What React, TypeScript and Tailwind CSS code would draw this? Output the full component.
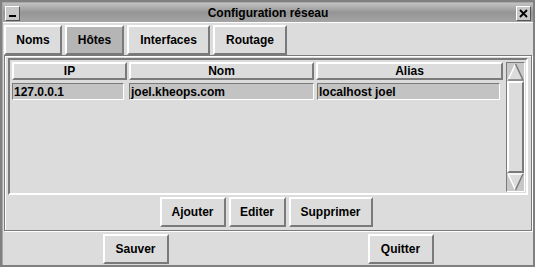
import React from "react"

const raised = "border-2 border-t-white border-l-white border-b-[#7a7a7a] border-r-[#7a7a7a]"
const sunken = "border-2 border-t-[#7a7a7a] border-l-[#7a7a7a] border-b-white border-r-white"

function Btn({ label, w, pressed }: { label: string; w: string; pressed?: boolean }) {
  return (
    <div
      className={`${w} h-[30px] flex items-center justify-center ${raised} ${
        pressed ? "bg-[#b5b5b5]" : "bg-[#dcdcdc]"
      }`}
    >
      {label}
    </div>
  )
}

function Header({ label, w }: { label: string; w: string }) {
  return <div className={`${w} h-[18px] flex items-center justify-center ${raised} bg-[#dcdcdc]`}>{label}</div>
}

function Cell({ text, w }: { text: string; w: string }) {
  return (
    <div className={`${w} h-[17px] flex items-center pl-[1px] border border-t-[#7a7a7a] border-l-[#7a7a7a] border-b-white border-r-white bg-[#c3c3c3]`}>
      {text}
    </div>
  )
}

export default function App() {
  const rows = [{ ip: "127.0.0.1", nom: "joel.kheops.com", alias: "localhost joel" }]

  return (
    <div
      className="w-[535px] h-[267px] bg-[#808080] p-[2px] text-[12px] font-bold text-black"
      style={{ fontFamily: '"Liberation Sans", Arial, sans-serif' }}
    >
      <div className="h-full flex flex-col bg-[#dcdcdc] border-l border-t border-[#a8a8a8]">
        {/* Title bar */}
        <div className="h-[19px] flex items-center px-[2px] bg-gradient-to-b from-[#c2c2c2] via-[#959595] to-[#a4a4a4]">
          <div className="w-[15px] h-[15px] mt-[1px] flex items-end justify-center pb-[3px] border border-t-white border-l-white border-b-[#555] border-r-[#555] bg-[#c8c8c8]">
            <div className="w-[7px] h-[2px] bg-black" />
          </div>
          <div className="flex-1 text-center leading-none">Configuration réseau</div>
          <div className="w-[15px] h-[15px] mt-[1px] flex items-center justify-center border border-t-white border-l-white border-b-[#555] border-r-[#555] bg-[#c8c8c8]">
            <svg width="9" height="9" viewBox="0 0 9 9">
              <path d="M1 1 L8 8 M8 1 L1 8" stroke="black" strokeWidth="1.8" />
            </svg>
          </div>
        </div>

        {/* Tabs */}
        <div className="h-[33px] flex items-center gap-[3px] pl-[1px] pt-[1px] border-t border-white">
          <Btn label="Noms" w="w-[58px]" />
          <Btn label="Hôtes" w="w-[59px]" pressed />
          <Btn label="Interfaces" w="w-[83px]" />
          <Btn label="Routage" w="w-[74px]" />
        </div>

        {/* Frame */}
        <div className="mx-[1px] h-[176px] flex flex-col border border-[#7a7a7a] shadow-[inset_1px_1px_0_white,1px_1px_0_white]">
          <div className={`mx-[3px] mt-[2px] h-[137px] flex ${sunken} bg-[#dcdcdc] pl-[2px] pt-[2px]`}>
            <div className="flex-1 flex flex-col">
              <div className="flex gap-[2px]">
                <Header label="IP" w="w-[115px]" />
                <Header label="Nom" w="w-[185px]" />
                <Header label="Alias" w="w-[187px]" />
              </div>
              <div className="flex flex-col mt-[3px]">
                {rows.map((r) => (
                  <div key={r.ip} className="flex">
                    <Cell text={r.ip} w="w-[112px]" />
                    <div className="w-[5px]" />
                    <Cell text={r.nom} w="w-[185px]" />
                    <div className="w-[3px]" />
                    <Cell text={r.alias} w="w-[183px]" />
                  </div>
                ))}
              </div>
            </div>
            {/* Scrollbar */}
            <div className="w-[19px] mr-[1px] mb-[1px] flex flex-col border border-t-[#7a7a7a] border-l-[#7a7a7a] border-b-white border-r-white bg-[#c8c8c8]">
              <svg width="17" height="18" viewBox="0 0 17 18">
                <path d="M1 17 L8.5 1 L16 17 Z" fill="#dcdcdc" />
                <path d="M1 17 L8.5 1" stroke="white" strokeWidth="1.5" />
                <path d="M8.5 1 L16 17 L1 17" stroke="#7a7a7a" strokeWidth="1.5" fill="none" />
              </svg>
              <div className="flex-1 border-2 border-t-white border-l-white border-b-[#7a7a7a] border-r-[#7a7a7a] bg-[#dcdcdc]" />
              <svg width="17" height="18" viewBox="0 0 17 18">
                <path d="M1 1 L8.5 17 L16 1 Z" fill="#dcdcdc" />
                <path d="M1 1 L16 1 M1 1 L8.5 17" stroke="white" strokeWidth="1.5" />
                <path d="M8.5 17 L16 1" stroke="#7a7a7a" strokeWidth="1.5" />
              </svg>
            </div>
          </div>
          <div className="flex-1 flex items-center justify-center gap-[3px] pb-[1px] pr-[4px]">
            <Btn label="Ajouter" w="w-[66px]" />
            <Btn label="Editer" w="w-[57px]" />
            <Btn label="Supprimer" w="w-[84px]" />
          </div>
        </div>

        {/* Bottom */}
        <div className="flex-1 grid grid-cols-2 items-center justify-items-center pt-[1px]">
          <Btn label="Sauver" w="w-[66px]" />
          <Btn label="Quitter" w="w-[66px]" />
        </div>
      </div>
    </div>
  )
}
